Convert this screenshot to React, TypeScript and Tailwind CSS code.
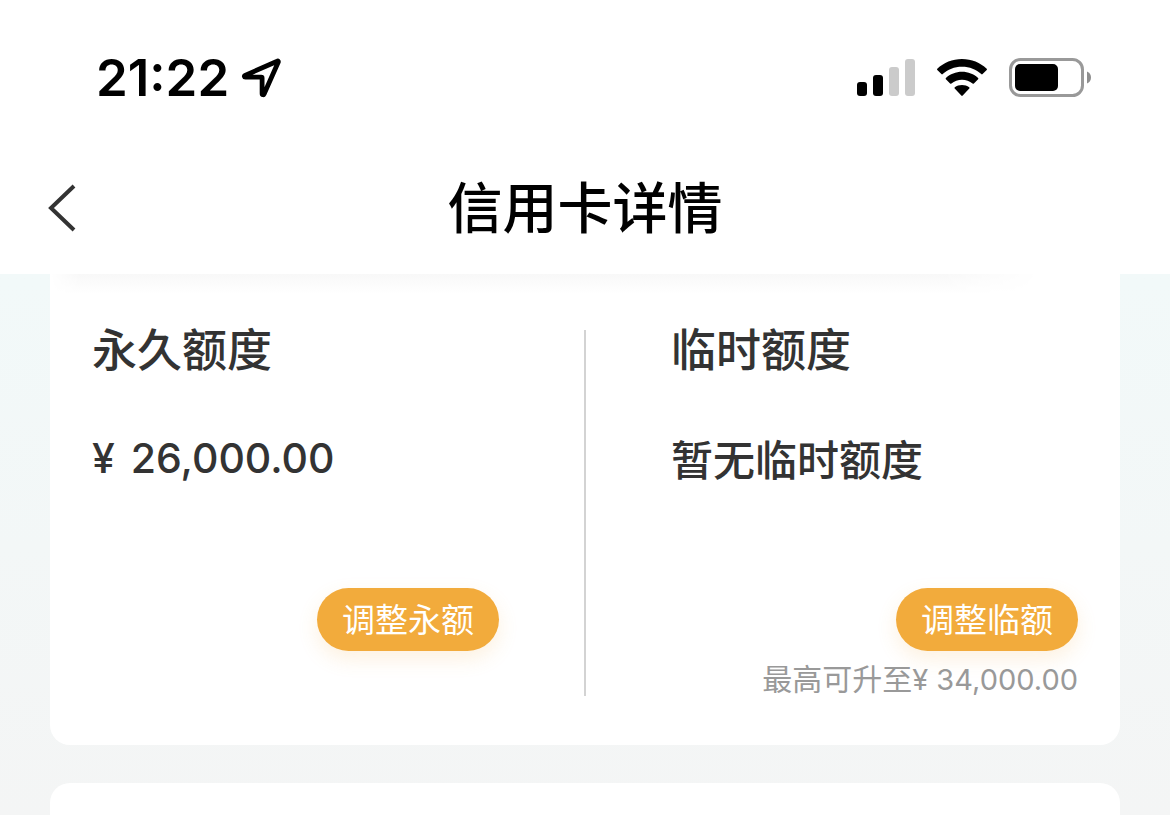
import type { ReactNode } from "react";

const LocationIcon = () => (
  <svg className="h-10 w-10" viewBox="0 0 40 40" fill="none" aria-hidden="true">
    <path
      d="M36.2 3.2 4 17.400c-1 .5-.8 1.700.4 1.700H20.200c.6 0 .9.300.9.900V35.600c0 1.400 1.500 1.500 2 .400L37.200 4.300c.4-.9-.2-1.500-1-1.100Z"
      stroke="currentColor"
      strokeWidth="4.800"
      strokeLinejoin="round"
    />
  </svg>
);

const SignalIcon = () => (
  <svg className="h-[38px] w-[58px]" viewBox="0 0 58 38" aria-hidden="true">
    <rect x="0" y="23" width="10" height="14" rx="3" fill="#000" />
    <rect x="16" y="16" width="10" height="21" rx="3" fill="#000" />
    <rect x="32" y="8" width="10" height="29" rx="3" fill="#cbcbcb" />
    <rect x="48" y="0" width="10" height="37" rx="3" fill="#cbcbcb" />
  </svg>
);

const WifiIcon = () => (
  <svg className="h-[38px] w-[50px]" viewBox="0 0 50 38" aria-hidden="true">
    <path d="M25 0C15.400 0 6.700 3.700.3 9.700c-.4.400-.4.900 0 1.300l4.100 4.100c.4.400.9.400 1.300 0C10.700 10.400 17.400 7.800 25 7.800s14.300 2.600 19.300 7.300c.4.400.9.400 1.300 0l4.100-4.100c.4-.4.400-.9 0-1.300C43.300 3.700 34.600 0 25 0Z" />
    <path d="M25 12.800c-6.200 0-11.800 2.300-16.100 6.100-.4.400-.4.900 0 1.300l4.200 4.200c.4.400.9.400 1.300.1 2.900-2.400 6.600-3.800 10.600-3.800s7.700 1.400 10.600 3.800c.4.300.9.300 1.300-.1l4.200-4.200c.4-.4.400-.9 0-1.300-4.300-3.800-9.900-6.100-16.100-6.100Z" />
    <path d="M25 26c-2.700 0-5.200.9-7.200 2.300-.5.400-.5.900-.1 1.300l6.600 7c.4.400 1 .4 1.400 0l6.600-7c.4-.4.400-.9-.1-1.300C30.200 26.900 27.700 26 25 26Z" />
  </svg>
);

const BatteryIcon = () => (
  <svg className="h-[40px] w-[82px]" viewBox="0 0 82 40" aria-hidden="true">
    <rect x="1.500" y="1.500" width="72" height="36" rx="10" fill="none" stroke="#999" strokeWidth="3" />
    <rect x="6" y="6" width="43" height="27" rx="5" fill="#000" />
    <path d="M78 13.500c2.500 1 4 3.300 4 6s-1.500 5-4 6Z" fill="#8e8e8e" />
  </svg>
);

type LimitProps = {
  title: string;
  value: ReactNode;
  action: string;
  note?: ReactNode;
};

function Limit({ title, value, action, note }: LimitProps) {
  return (
    <section className="flex flex-col items-start text-[#333]">
      <h2 className="-mt-3 text-[45px] leading-[60px] font-medium">{title}</h2>
      <p className="mt-[50px] h-[60px] text-[42px] leading-[60px] font-medium">{value}</p>
      <button
        type="button"
        className="mt-[100px] h-[63px] self-end rounded-full bg-[#f2ab3c] px-[25px] pb-1 text-[33px] leading-[56px] text-white shadow-[0_8px_20px_rgba(242,171,60,0.16)]"
      >
        {action}
      </button>
      {note && <p className="mt-1.5 self-end text-[30px] leading-[40px] text-[#999]">{note}</p>}
    </section>
  );
}

export default function App() {
  return (
    <div
      lang="zh-CN"
      className="flex min-h-screen flex-col overflow-hidden bg-linear-to-b from-[#f2f9f9] from-35% to-[#f4f5f5] font-['Noto_Sans_CJK_SC',sans-serif]"
    >
      <header className="bg-white text-black">
        <div className="flex items-center justify-between pt-[48px] pr-[79px] pl-24">
          <div className="flex items-center gap-3">
            <time className="font-['Inter',sans-serif] text-[51px] leading-[60px] font-semibold">21:22</time>
            <LocationIcon />
          </div>
          <div className="flex items-center gap-[22px]">
            <SignalIcon />
            <WifiIcon />
            <BatteryIcon />
          </div>
        </div>
        <div className="mt-[56px] grid grid-cols-[1fr_auto_1fr] items-center px-12 pb-[30px]">
          <button type="button" aria-label="返回" className="mt-2 justify-self-start">
            <svg className="h-12 w-7" viewBox="0 0 28 48" fill="none" aria-hidden="true">
              <path d="M26 2 3 24 26 46" stroke="#333" strokeWidth="4" />
            </svg>
          </button>
          <h1 className="text-[55px] leading-[80px] font-medium">信用卡详情</h1>
        </div>
      </header>

      <main className="flex grow flex-col gap-[38px] px-[50px]">
        <div className="rounded-b-[20px] bg-white pb-[45px]">
          <div className="mr-20 h-5 bg-linear-to-b from-[#f8f8f8] to-white mask-r-from-90% mask-l-from-97%" />
          <div className="mt-9 grid grid-cols-[1fr_2px_1fr] gap-x-[85px] px-[42px]">
            <Limit
              title="永久额度"
              value={
                <span className="flex gap-4 font-['Inter',sans-serif] text-[41px]">
                  <span>¥</span>
                  <span>26,000.00</span>
                </span>
              }
              action="调整永额"
            />
            <div className="h-[366px] bg-[#d3d3d3]" />
            <Limit
              title="临时额度"
              value="暂无临时额度"
              action="调整临额"
              note={
                <>
                  最高可升至
                  <span className="font-['Inter',sans-serif] text-[29px]">¥ 34,000.00</span>
                </>
              }
            />
          </div>
        </div>
        <div className="grow rounded-t-[20px] bg-white" />
      </main>
    </div>
  );
}
